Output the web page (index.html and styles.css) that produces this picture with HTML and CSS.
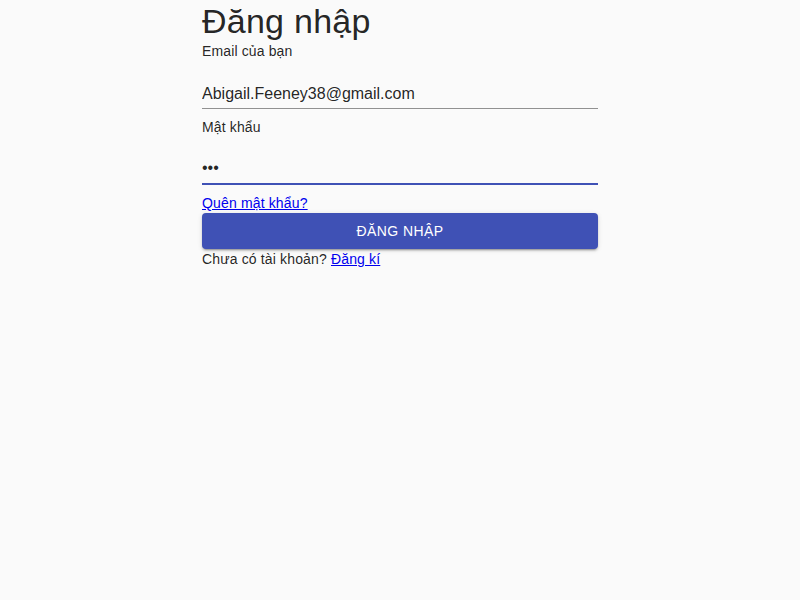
FILE: index.html
```html
<!DOCTYPE html>
<html lang="vi">
<head>
<meta charset="utf-8">
<title>Đăng nhập</title>
<link rel="stylesheet" href="styles.css">
</head>
<body>
<main class="container">
  <h1 class="title">Đăng nhập</h1>
  <form class="form">
    <div class="field">
      <label class="label" for="email">Email của bạn</label>
      <input class="input input-text" id="email" type="email" value="Abigail.Feeney38@gmail.com">
    </div>
    <div class="field">
      <label class="label" for="pw">Mật khẩu</label>
      <input class="input input-focused" id="pw" type="password" value="abc">
    </div>
    <a class="link forgot" href="#">Quên mật khẩu?</a>
    <button class="button" type="button">Đăng nhập</button>
    <p class="signup">Chưa có tài khoản? <a class="link" href="#">Đăng kí</a></p>
  </form>
</main>
</body>
</html>
```
FILE: styles.css
```css
html, body {
  margin: 0;
  padding: 0;
  background: #fafafa;
}
body {
  font-family: "Liberation Sans", Arial, sans-serif;
  color: rgba(0, 0, 0, 0.87);
}
.container {
  width: 396px;
  margin: 0 auto;
}
.title {
  margin: 0 0 1px;
  font-size: 34px;
  font-weight: 400;
  line-height: 42px;
  letter-spacing: 0.25px;
}
.form {
  display: flex;
  flex-direction: column;
}
.field {
  display: flex;
  flex-direction: column;
  margin-bottom: 10px;
}
.label {
  font-size: 14px;
  line-height: 16px;
  letter-spacing: 0.13px;
  color: rgba(0, 0, 0, 0.87);
}
.input {
  margin-top: 18px;
  height: 32px;
  box-sizing: border-box;
  padding: 6px 0 7px;
  border: 0;
  border-bottom: 1px solid rgba(0, 0, 0, 0.42);
  background: transparent;
  font-family: "Liberation Sans", Arial, sans-serif;
  font-size: 16px;
  color: rgba(0, 0, 0, 0.87);
  outline: none;
}
.input-text {
  padding: 8px 0 5px;
}
.input-focused {
  border-bottom: 2px solid #3f51b5;
  padding-bottom: 6px;
}
.link {
  color: #0000ee;
  text-decoration: underline;
  font-size: 14px;
  letter-spacing: 0.15px;
}
.forgot {
  line-height: 16px;
  margin-top: 0;
}
.button {
  margin-top: 2px;
  height: 36px;
  border: 0;
  border-radius: 4px;
  background: #3f51b5;
  color: #fff;
  font-family: "Liberation Sans", Arial, sans-serif;
  font-size: 14px;
  letter-spacing: 0.4px;
  text-transform: uppercase;
  box-shadow: 0 3px 1px -2px rgba(0,0,0,0.2), 0 2px 2px 0 rgba(0,0,0,0.14), 0 1px 5px 0 rgba(0,0,0,0.12);
}
.signup {
  margin: 2px 0 0;
  font-size: 14px;
  line-height: 16px;
  letter-spacing: 0.15px;
}
```
